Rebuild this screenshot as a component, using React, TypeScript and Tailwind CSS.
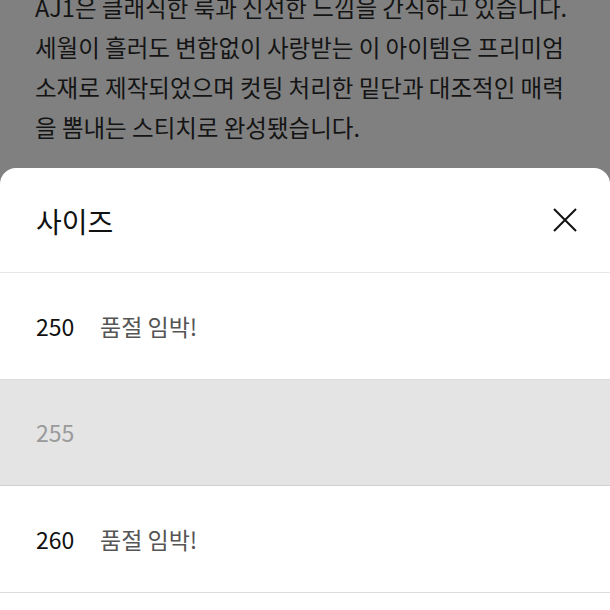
import React from "react";

export default function App() {
  const lines = [
    "AJ1은 클래식한 룩과 신선한 느낌을 간직하고 있습니다.",
    "세월이 흘러도 변함없이 사랑받는 이 아이템은 프리미엄",
    "소재로 제작되었으며 컷팅 처리한 밑단과 대조적인 매력",
    "을 뽐내는 스티치로 완성됐습니다.",
  ];
  return (
    <div className="w-[610px] h-[610px] overflow-hidden bg-[#808080] flex flex-col [font-family:'Noto_Sans_CJK_KR','Noto_Sans',sans-serif]">
      <div className="mt-[-13px] pl-[35px] text-[23.5px] leading-[40px] text-[#141414] h-[181px] shrink-0">
        {lines.map((l, i) => (
          <div key={i} className="whitespace-nowrap">{l}</div>
        ))}
      </div>
      <div className="flex-1 bg-white rounded-t-[16px] flex flex-col">
        <div className="h-[105px] flex items-center justify-between pl-[36px] pr-[32px] border-b border-[#e6e6e6]">
          <span className="text-[28px] text-[#111] pt-[2px]">사이즈</span>
          <svg width="26" height="26" viewBox="0 0 26 26" className="text-[#111]">
            <path d="M2 2 L24 24 M24 2 L2 24" stroke="currentColor" strokeWidth="2" fill="none" />
          </svg>
        </div>
        <div className="h-[107px] flex items-center pl-[36px] border-b border-[#dcdcdc] text-[23px]">
          <span className="text-[#111] w-[64px]">250</span>
          <span className="text-[#555]">품절 임박!</span>
        </div>
        <div className="h-[106px] flex items-center pl-[36px] border-b border-[#d0d0d0] bg-[#e4e4e4] text-[23px]">
          <span className="text-[#9a9a9a]">255</span>
        </div>
        <div className="h-[107px] flex items-center pl-[36px] border-b border-[#dcdcdc] text-[23px]">
          <span className="text-[#111] w-[64px]">260</span>
          <span className="text-[#555]">품절 임박!</span>
        </div>
      </div>
    </div>
  );
}
